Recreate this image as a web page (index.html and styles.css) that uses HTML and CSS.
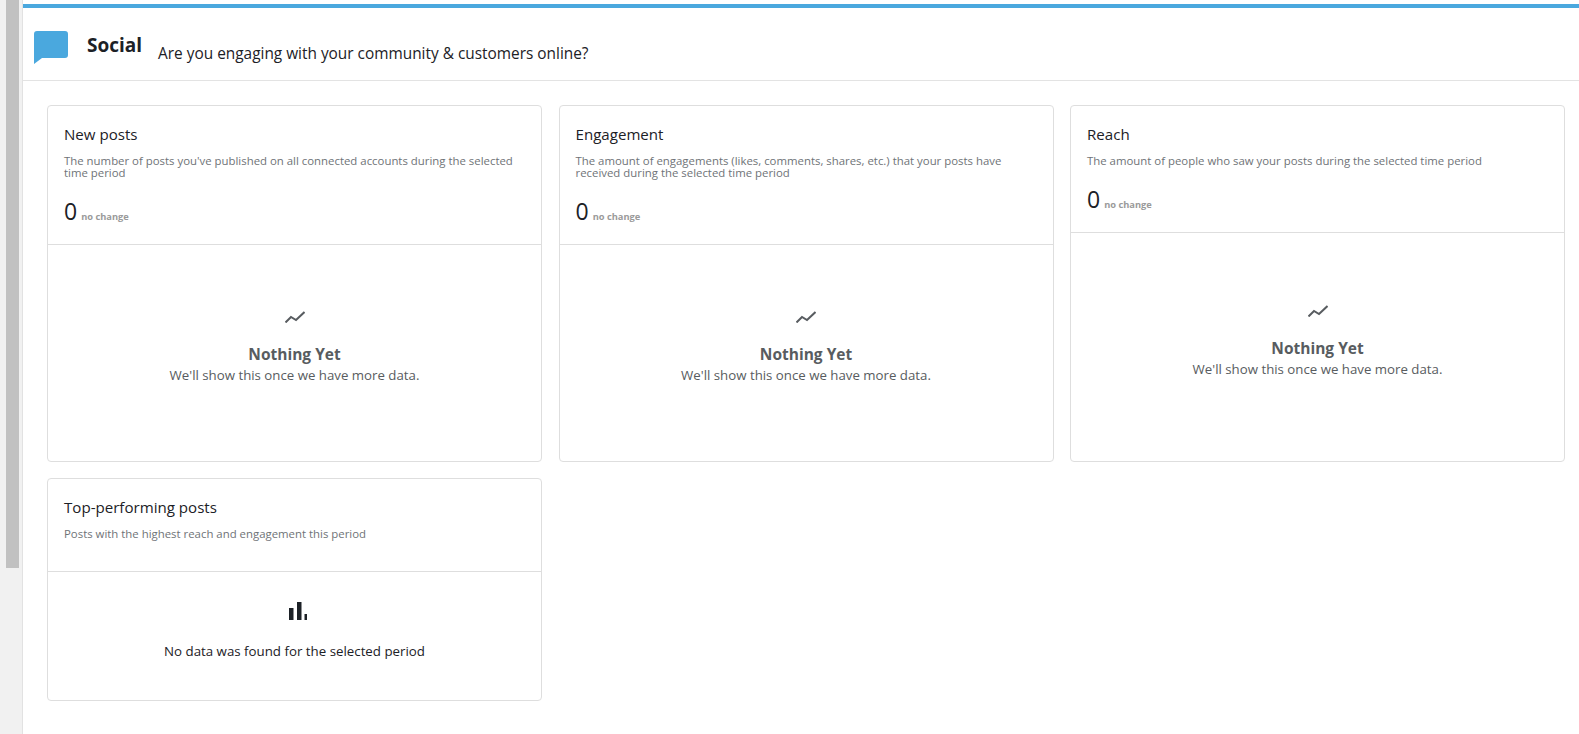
FILE: index.html
```html
<!DOCTYPE html>
<html lang="en">
<head>
  <meta charset="UTF-8">
  <title>Social</title>
  <link rel="stylesheet" href="styles.css">
</head>
<body>
  <div class="gutter"><div class="thumb"></div></div>

  <div class="main">
    <div class="header">
      <svg class="header-icon" width="34" height="34" viewBox="0 0 34 34">
        <path fill="#4aa8de" d="M3 0H31Q34 0 34 3V24Q34 27 31 27H8L0 33V3Q0 0 3 0Z"/>
      </svg>
      <h1>Social</h1>
      <p>Are you engaging with your community &amp; customers online?</p>
    </div>

    <div class="cards">
      <div class="card">
        <div class="card-top">
          <h3>New posts</h3>
          <p class="desc">The number of posts you've published on all connected accounts during the selected time period</p>
          <div class="stat"><span class="num">0</span> <span class="change">no change</span></div>
        </div>
        <div class="empty">
          <svg class="trend" width="20" height="12" viewBox="0 0 20 12"><path d="M0.5 11.5L6 6L11 9L19.5 1"/></svg>
          <strong>Nothing Yet</strong>
          <span>We'll show this once we have more data.</span>
        </div>
      </div>

      <div class="card">
        <div class="card-top">
          <h3>Engagement</h3>
          <p class="desc">The amount of engagements (likes, comments, shares, etc.) that your posts have received during the selected time period</p>
          <div class="stat"><span class="num">0</span> <span class="change">no change</span></div>
        </div>
        <div class="empty">
          <svg class="trend" width="20" height="12" viewBox="0 0 20 12"><path d="M0.5 11.5L6 6L11 9L19.5 1"/></svg>
          <strong>Nothing Yet</strong>
          <span>We'll show this once we have more data.</span>
        </div>
      </div>

      <div class="card">
        <div class="card-top">
          <h3>Reach</h3>
          <p class="desc">The amount of people who saw your posts during the selected time period</p>
          <div class="stat"><span class="num">0</span> <span class="change">no change</span></div>
        </div>
        <div class="empty">
          <svg class="trend" width="20" height="12" viewBox="0 0 20 12"><path d="M0.5 11.5L6 6L11 9L19.5 1"/></svg>
          <strong>Nothing Yet</strong>
          <span>We'll show this once we have more data.</span>
        </div>
      </div>

      <div class="card">
        <div class="card-top short">
          <h3>Top-performing posts</h3>
          <p class="desc">Posts with the highest reach and engagement this period</p>
        </div>
        <div class="no-data">
          <svg width="18" height="18" viewBox="0 0 18 18" fill="#1c2126">
            <rect x="0" y="6" width="4.5" height="12"/>
            <rect x="8" y="0" width="4.5" height="18"/>
            <rect x="15.5" y="12" width="2.5" height="6"/>
          </svg>
          <span>No data was found for the selected period</span>
        </div>
      </div>
    </div>
  </div>
</body>
</html>
```

FILE: styles.css
```css
* { box-sizing: border-box; }
html, body { height: 100%; }
body {
  margin: 0;
  display: flex;
  height: 734px;
  overflow: hidden;
  font-family: "Open Sans", "Noto Sans", Arial, sans-serif;
  color: #1c2126;
  background: white;
}
.gutter {
  width: 23px;
  flex: none;
  padding-left: 6px;
  background: #f1f1f1;
  border-right: 1px solid #e2e2e2;
}
.thumb {
  width: 13px;
  height: 568px;
  background: #c1c1c1;
}
.main {
  flex: 1;
  margin-top: 4px;
  border-top: 4px solid #4aa8de;
}
.header {
  display: flex;
  align-items: flex-start;
  height: 73px;
  padding: 23px 0 0 11px;
  border-bottom: 1px solid #e3e3e3;
}
.header-icon { flex: none; }
.header h1 {
  margin: 0 0 0 19px;
  font-size: 19px;
  font-weight: 700;
  line-height: 28px;
}
.header p {
  margin: 13px 0 0 16px;
  font-size: 15.4px;
  line-height: 20px;
}
.cards {
  display: grid;
  grid-template-columns: repeat(3, 495px);
  grid-template-rows: 357px 223px;
  gap: 16px 16.5px;
  padding: 24px 0 0 24px;
}
.card {
  display: flex;
  flex-direction: column;
  border: 1px solid #dedede;
  border-radius: 4px;
}
.card-top {
  padding: 18px 16px 0;
  border-bottom: 1px solid #dedede;
}
.card-top.short { height: 93px; }
.card h3 {
  margin: 0;
  font-size: 15.1px;
  font-weight: 400;
  line-height: 20px;
}
.desc {
  margin: 11px 0 0;
  font-size: 11.4px;
  line-height: 12px;
  color: #6f7377;
}
.stat {
  display: flex;
  align-items: baseline;
  gap: 4px;
  margin-top: 17px;
  height: 48px;
}
.num {
  font-size: 23px;
  line-height: 30px;
}
.change {
  font-size: 9.3px;
  font-weight: 700;
  color: #9a9a9a;
}
/* content sits in the middle, so the shorter Reach header pushes it up */
.empty {
  flex: 1;
  display: flex;
  flex-direction: column;
  align-items: center;
  justify-content: center;
  padding-bottom: 10px;
  font-size: 13.25px;
  line-height: 19px;
  color: #585c60;
}
.trend {
  fill: none;
  stroke: #585c60;
  stroke-width: 2;
  margin-bottom: 21px;
}
.empty strong {
  font-size: 15.5px;
  line-height: 20px;
  margin-bottom: 2px;
}
.no-data {
  flex: 1;
  display: flex;
  flex-direction: column;
  align-items: center;
  padding-top: 30px;
  font-size: 13.3px;
  line-height: 18px;
}
.no-data svg {
  margin-bottom: 22px;
  margin-left: 6px;
}
```
